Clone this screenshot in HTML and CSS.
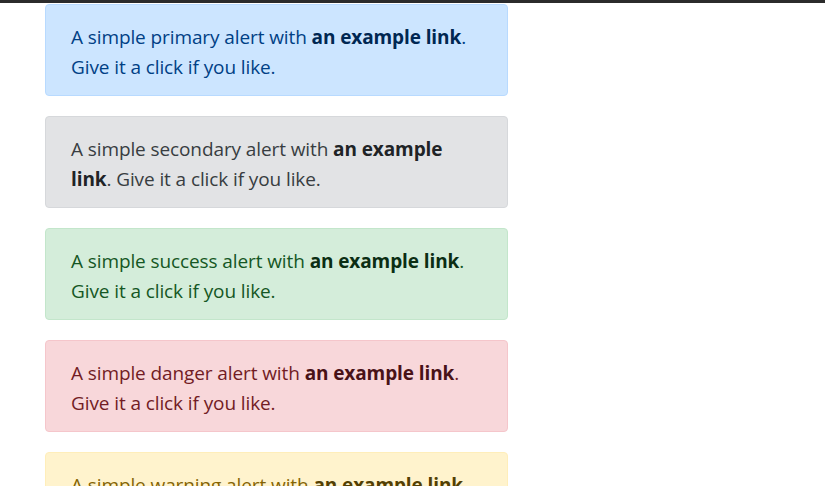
FILE: index.html
```html
<!DOCTYPE html>
<html>
<head>
<meta charset="utf-8">
<link rel="stylesheet" href="styles.css">
</head>
<body>
<div class="topbar"></div>
<main class="page">
  <div class="alert alert-primary">A simple primary alert with <a href="#" class="alert-link">an example link</a>. Give it a click if you like.</div>
  <div class="alert alert-secondary">A simple secondary alert with <a href="#" class="alert-link">an example link</a>. Give it a click if you like.</div>
  <div class="alert alert-success">A simple success alert with <a href="#" class="alert-link">an example link</a>. Give it a click if you like.</div>
  <div class="alert alert-danger">A simple danger alert with <a href="#" class="alert-link">an example link</a>. Give it a click if you like.</div>
  <div class="alert alert-warning">A simple warning alert with <a href="#" class="alert-link">an example link</a>. Give it a click if you like.</div>
</main>
</body>
</html>
```
FILE: styles.css
```css
html, body {
  margin: 0;
  padding: 0;
  background: #fff;
  overflow: hidden;
}
body {
  font-family: "Open Sans", "Noto Sans", sans-serif;
  font-size: 19px;
  line-height: 30px;
  letter-spacing: -0.1px;
}
.topbar {
  height: 3px;
  background: #2b2b2b;
}
.page {
  padding: 1px 0 0 45px;
  display: flex;
  flex-direction: column;
  gap: 20px;
}
.alert {
  width: 411px;
  padding: 17px 25px 13px;
  border: 1px solid transparent;
  border-radius: 4px;
}
.alert-link {
  font-weight: 700;
  text-decoration: none;
}
.alert-primary { color: #004085; background: #cce5ff; border-color: #b8daff; }
.alert-primary .alert-link { color: #002752; }
.alert-secondary { color: #383d41; background: #e2e3e5; border-color: #d6d8db; }
.alert-secondary .alert-link { color: #202326; }
.alert-success { color: #155724; background: #d4edda; border-color: #c3e6cb; }
.alert-success .alert-link { color: #0b2e13; }
.alert-danger { color: #721c24; background: #f8d7da; border-color: #f5c6cb; }
.alert-danger .alert-link { color: #491217; }
.alert-warning { color: #856404; background: #fff3cd; border-color: #ffeeba; }
.alert-warning .alert-link { color: #533f03; }
```
